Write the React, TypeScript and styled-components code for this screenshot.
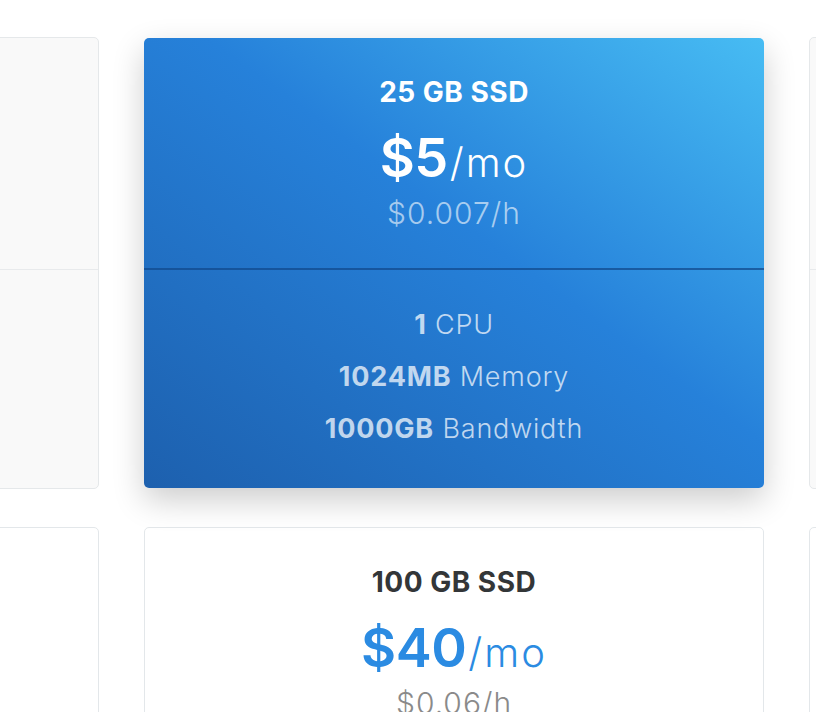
import React from "react";
import styled, { createGlobalStyle, css } from "styled-components";

const Global = createGlobalStyle`
  html, body { margin: 0; padding: 0; background: #ffffff; }
  body { font-family: Inter, Lato, sans-serif; overflow: hidden; }
  * { box-sizing: border-box; }
`;

const Page = styled.div`
  width: 816px;
  height: 712px;
  overflow: hidden;
`;

const Grid = styled.div`
  display: grid;
  grid-template-columns: repeat(3, 620px);
  column-gap: 45px;
  row-gap: 38px;
  margin-left: -521px;
  padding-top: 37px;
`;

const Card = styled.div<{ $variant: "featured" | "muted" | "plain" }>`
  display: flex;
  flex-direction: column;
  height: 452px;
  border-radius: 5px;
  text-align: center;
  ${(p) =>
    p.$variant === "featured"
      ? css`
          margin: 1px 0;
          height: 450px;
          background: linear-gradient(to top right, #1d60ae 0%, #2681da 55%, #47bcf3 100%);
          box-shadow: 0 12px 32px rgba(0, 0, 0, 0.2);
          color: #ffffff;
          position: relative;
          z-index: 1;
        `
      : p.$variant === "muted"
      ? css`
          border: 1px solid #e5e8ea;
          background: #f9f9f9;
          color: #333;
        `
      : css`
          border: 1px solid #e3e7ea;
          background: #ffffff;
          color: #333;
        `}
`;

const Header = styled.div<{ $featured?: boolean }>`
  height: 232px;
  padding-top: 36px;
  display: flex;
  flex-direction: column;
  align-items: center;
  border-bottom: ${(p) => (p.$featured ? "2px solid rgba(18, 74, 140, 0.75)" : "1px solid #e8eaec")};
`;

const Title = styled.div<{ $featured?: boolean }>`
  font-size: 28px;
  line-height: 36px;
  font-weight: 700;
  letter-spacing: 0.5px;
  color: ${(p) => (p.$featured ? "#ffffff" : "#333638")};
`;

const Price = styled.div<{ $featured?: boolean }>`
  margin-top: 19px;
  line-height: 58px;
  color: ${(p) => (p.$featured ? "#ffffff" : "#2b8be2")};
  display: flex;
  align-items: baseline;
`;

const Amount = styled.span`
  font-size: 54px;
  font-weight: 600;
  letter-spacing: -0.5px;
`;

const Per = styled.span`
  font-size: 40px;
  font-weight: 300;
  letter-spacing: 2px;
  margin-left: 2px;
`;

const Hourly = styled.div<{ $featured?: boolean }>`
  margin-top: 4px;
  font-size: 30px;
  line-height: 34px;
  font-weight: 300;
  letter-spacing: 1px;
  color: ${(p) => (p.$featured ? "rgba(255,255,255,0.6)" : "#8a8a8a")};
`;

const Features = styled.div`
  padding-top: 29px;
  display: flex;
  flex-direction: column;
  align-items: center;
`;

const Feature = styled.div`
  font-size: 27px;
  line-height: 52px;
  font-weight: 300;
  letter-spacing: 0.8px;
  color: rgba(255, 255, 255, 0.72);
  b {
    font-weight: 700;
  }
`;

type Plan = {
  ssd: string;
  price: string;
  hourly: string;
  cpu: string;
  mem: string;
  bw: string;
};

const featured: Plan = {
  ssd: "25 GB SSD",
  price: "$5",
  hourly: "$0.007/h",
  cpu: "1",
  mem: "1024MB",
  bw: "1000GB",
};

const second: Plan = {
  ssd: "100 GB SSD",
  price: "$40",
  hourly: "$0.06/h",
  cpu: "4",
  mem: "8192MB",
  bw: "5000GB",
};

function PlanHeader({ plan, isFeatured }: { plan: Plan; isFeatured?: boolean }) {
  return (
    <Header $featured={isFeatured}>
      <Title $featured={isFeatured}>{plan.ssd}</Title>
      <Price $featured={isFeatured}>
        <Amount>{plan.price}</Amount>
        <Per>/mo</Per>
      </Price>
      <Hourly $featured={isFeatured}>{plan.hourly}</Hourly>
    </Header>
  );
}

const EmptyHeader = styled.div`
  height: 232px;
  border-bottom: 1px solid #e8eaec;
`;

export default function App() {
  return (
    <Page>
      <Global />
      <Grid>
        <Card $variant="muted">
          <EmptyHeader />
        </Card>
        <Card $variant="featured">
          <PlanHeader plan={featured} isFeatured />
          <Features>
            <Feature>
              <b>{featured.cpu}</b> CPU
            </Feature>
            <Feature>
              <b>{featured.mem}</b> Memory
            </Feature>
            <Feature>
              <b>{featured.bw}</b> Bandwidth
            </Feature>
          </Features>
        </Card>
        <Card $variant="muted">
          <EmptyHeader />
        </Card>
        <Card $variant="plain" />
        <Card $variant="plain">
          <PlanHeader plan={second} />
        </Card>
        <Card $variant="plain" />
      </Grid>
    </Page>
  );
}
